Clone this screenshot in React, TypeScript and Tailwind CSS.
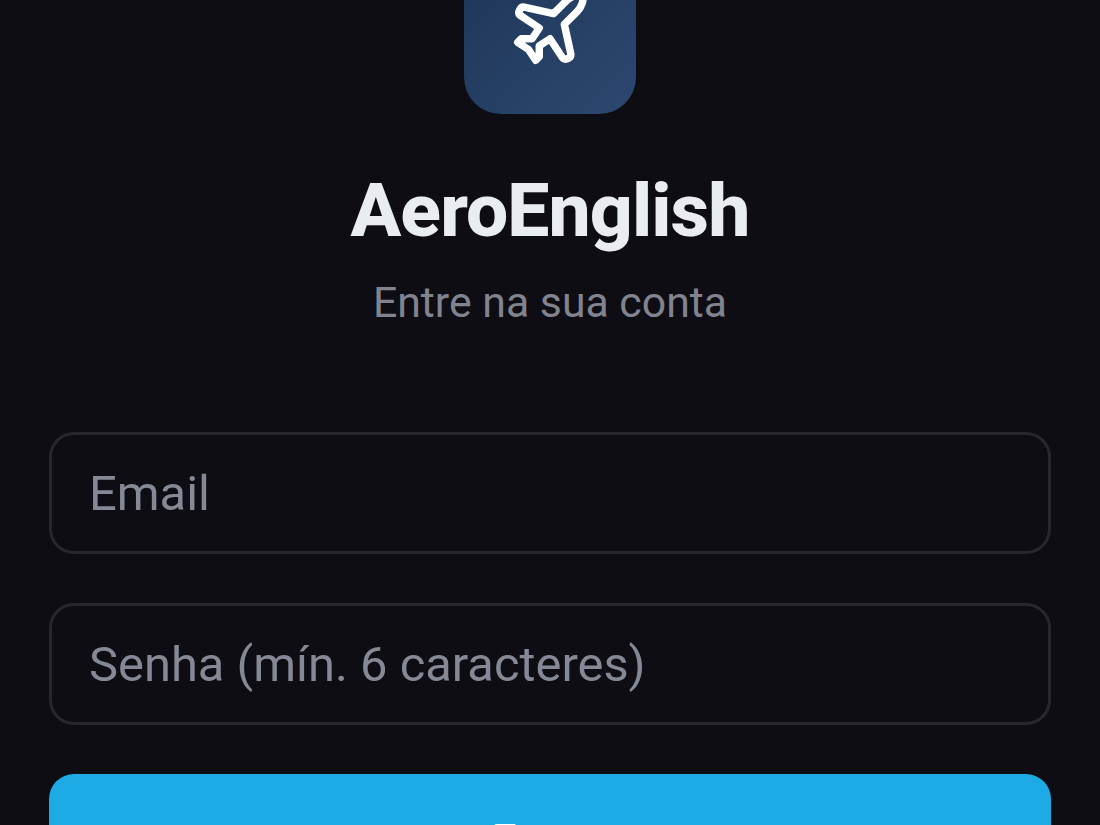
import { Plane } from "lucide-react";

function Field({ type, placeholder }: { type: string; placeholder: string }) {
  return (
    <input
      type={type}
      placeholder={placeholder}
      className="block h-[122px] w-full rounded-[25px] border-[3px] border-[#27272e] bg-[#0d0d13] px-[37px] text-[48.85px] leading-[64px] text-[#e8eaf0] outline-none placeholder:text-[#858995]"
    />
  );
}

export default function App() {
  return (
    <div className="h-[825px] overflow-hidden bg-[#0d0d13] font-['Roboto',sans-serif]">
      <main className="-mt-[58px] flex flex-col items-center px-[49px]">
        <div className="flex h-[172px] w-[172px] shrink-0 items-center justify-center rounded-[37px] bg-linear-to-br from-[#1e3557] to-[#2c4870]">
          <Plane className="h-[86px] w-[86px] text-white" strokeWidth={2.08} />
        </div>
        <h1 className="mt-[48px] text-[75px] leading-[96px] font-extrabold tracking-[-0.9px] text-[#e9ecf1]">
          AeroEnglish
        </h1>
        <p className="mt-[12px] text-[42.8px] leading-[64px] text-[#81848f]">Entre na sua conta</p>
        <form className="mt-[98px] flex w-full flex-col gap-[49px]">
          <Field type="email" placeholder="Email" />
          <Field type="password" placeholder="Senha (mín. 6 caracteres)" />
          <button
            type="button"
            className="h-[129px] w-full rounded-[25px] bg-[#1daae5] text-[43px] leading-[60px] font-semibold text-white"
          >
            Entrar
          </button>
        </form>
      </main>
    </div>
  );
}
